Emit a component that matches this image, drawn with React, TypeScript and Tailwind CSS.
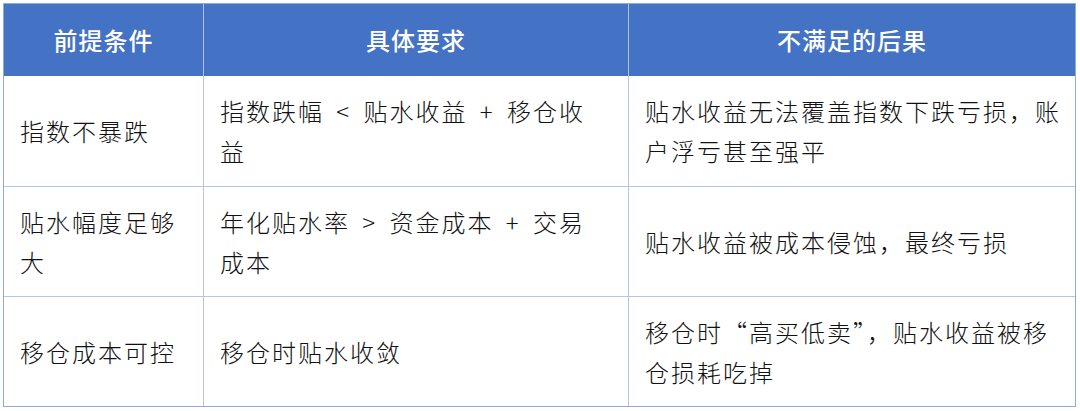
const font = { fontFamily: '"Noto Sans CJK SC", "Liberation Sans", sans-serif' };

const Sym = ({ c }: { c: string }) => <span className="mx-[5px]">{c}</span>;

type Line = React.ReactNode;

const rows: Line[][][] = [
  [
    ["指数不暴跌"],
    [<>指数跌幅 <Sym c="<" /> 贴水收益 <Sym c="+" /> 移仓收</>, "益"],
    ["贴水收益无法覆盖指数下跌亏损，账", "户浮亏甚至强平"],
  ],
  [
    ["贴水幅度足够", "大"],
    [<>年化贴水率 <Sym c=">" /> 资金成本 <Sym c="+" /> 交易</>, "成本"],
    ["贴水收益被成本侵蚀，最终亏损"],
  ],
  [
    ["移仓成本可控"],
    ["移仓时贴水收敛"],
    ["移仓时“高买低卖”，贴水收益被移", "仓损耗吃掉"],
  ],
];

export default function App() {
  return (
    <div className="w-[1080px] h-[411px] bg-white pt-[3px] pl-[3px]" style={font}>
      <div className="w-[1073px] border border-[#8faadc] grid grid-cols-[199px_425px_1fr]">
        {["前提条件", "具体要求", "不满足的后果"].map((h, i) => (
          <div
            key={h}
            className={`h-[72px] bg-[#4472c4] text-white text-[24px] tracking-[1px] font-medium flex items-center justify-center ${i > 0 ? "border-l border-[#a9c0ea]" : ""}`}
          >
            {h}
          </div>
        ))}
        {rows.map((r, ri) =>
          r.map((cell, ci) => (
            <div
              key={`${ri}-${ci}`}
              className={`h-[110px] flex flex-col justify-center pl-[16px] text-[24px] leading-[40px] tracking-[2px] text-[#111] font-light whitespace-nowrap ${ci > 0 ? "border-l border-[#b4c6e7]" : ""} ${ri > 0 ? "border-t border-[#b4c6e7]" : ""}`}
            >
              {cell.map((line, li) => (
                <div key={li}>{line}</div>
              ))}
            </div>
          ))
        )}
      </div>
    </div>
  );
}
